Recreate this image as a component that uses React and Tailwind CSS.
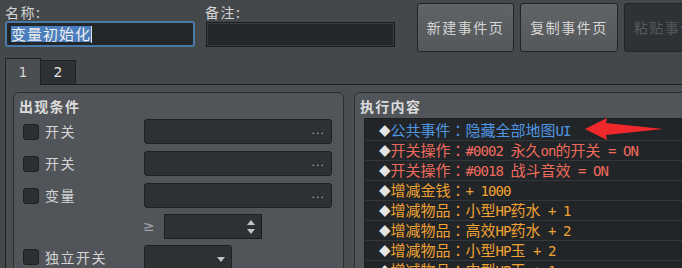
import React from 'react';

const rows = [
  { color: 'text-[#4f96e2]', text: '公共事件：隐藏全部地图UI' },
  { color: 'text-[#ee6a5c]', text: '开关操作：#0002 永久on的开关 = ON' },
  { color: 'text-[#ee6a5c]', text: '开关操作：#0018 战斗音效 = ON' },
  { color: 'text-[#f0a232]', text: '增减金钱：+ 1000' },
  { color: 'text-[#f0a232]', text: '增减物品：小型HP药水 + 1' },
  { color: 'text-[#f0a232]', text: '增减物品：高效HP药水 + 2' },
  { color: 'text-[#f0a232]', text: '增减物品：小型HP玉 + 2' },
  { color: 'text-[#f0a232]', text: '增减物品：中型HP玉 + 1' },
];

// split latin / cjk so the latin part gets the narrow mono font
function Runs({ text }) {
  const parts = text.match(/[\x00-\x7F]+|：|[^\x00-\x7F：]+/g) || [];
  return parts.map((p, i) => {
    if (p === '：') {
      return <span key={i} className="text-[15px] font-['Noto_Sans_CJK_JP',sans-serif]">{p}</span>;
    }
    if (/[\x00-\x7F]/.test(p[0])) {
      return (
        <span key={i} className="font-['DejaVu_Sans_Mono',monospace] text-[14px] tracking-[-0.93px]">
          {p}
        </span>
      );
    }
    return <span key={i} className="text-[15px]">{p}</span>;
  });
}

function Check() {
  return <div className="w-[16px] h-[16px] shrink-0 rounded-[3px] bg-[#2d3033] border border-[#1c1e20]" />;
}

function Field({ children }) {
  return (
    <div className="w-[188px] h-[25px] shrink-0 rounded-[3px] bg-[#2e3134] border border-[#1e2022] flex items-center justify-end pr-[6px]">
      {children}
    </div>
  );
}

function CondRow({ label, className = '' }) {
  return (
    <div className={`flex items-center pl-[9px] ${className}`}>
      <div className="w-[121px] shrink-0 flex items-center gap-[6px]">
        <Check />
        <span className="text-[14px] tracking-[1.5px] text-[#d4d4d4]">{label}</span>
      </div>
      <Field>
        <span className="font-['DejaVu_Sans',sans-serif] text-[11px] leading-none text-[#b4b4b4] tracking-[1px] -mt-[3px]">...</span>
      </Field>
    </div>
  );
}

export default function App() {
  return (
    <div className="relative w-[682px] h-[268px] overflow-hidden bg-[#45484b] font-['Noto_Sans_CJK_SC','Noto_Sans',sans-serif] text-[#d4d4d4]">
      {/* TOP ROW */}
      <div className="flex items-start pl-[5px] h-[58px]">
        <div className="w-[190px] shrink-0 flex flex-col">
          <div className="h-[21px] pt-[4px] leading-[17px] text-[14px] tracking-[1.5px]">名称:</div>
          <div className="h-[26px] rounded-[3px] border-2 border-[#4a78a8] bg-[#24272a] flex items-center pl-[4px]">
            <span className="bg-[#4a7dbd] text-[15px] leading-[16px] h-[16px] tracking-[1px] text-[#eeeeee]">变量初始化</span>
            <span className="w-px h-[17px] bg-[#e0e0e0]" />
          </div>
        </div>
        <div className="ml-[10px] w-[190px] shrink-0 flex flex-col">
          <div className="h-[22px] pt-[4px] leading-[17px] text-[14px] tracking-[1.5px]">备注:</div>
          <div className="ml-px w-[189px] h-[25px] border border-[#1a1c1e] shadow-[inset_0_0_0_1px_#3a3d40] bg-[#25282b]" />
        </div>
        <button className="ml-[22px] mt-[3px] w-[97px] h-[49px] shrink-0 rounded-[3px] border border-[#222426] bg-gradient-to-b from-[#606467] to-[#54585b] text-[14px] tracking-[1.5px] text-[#d6d6d6]">
          新建事件页
        </button>
        <button className="ml-[6px] mt-[3px] w-[98px] h-[49px] shrink-0 rounded-[3px] border border-[#222426] bg-gradient-to-b from-[#606467] to-[#54585b] text-[14px] tracking-[1.5px] text-[#d6d6d6]">
          复制事件页
        </button>
        <button className="ml-[6px] mt-[3px] w-[97px] h-[49px] shrink-0 rounded-[3px] border border-[#222426] bg-[#2f3235] text-[14px] tracking-[1.5px] text-[#55595c]">
          粘贴事件页
        </button>
      </div>

      {/* TABS */}
      <div className="flex items-end h-[27px] pl-[5px]">
        <div className="w-[36px] h-[27px] shrink-0 border border-b-0 border-[#1e2023] bg-[#4a4e51] flex items-center justify-center font-['DejaVu_Sans',sans-serif] text-[14px] text-[#d0d0d0]">
          1
        </div>
        <div className="w-[35px] h-[25px] shrink-0 border border-l-0 border-[#1e2023] bg-[#2e3134] flex items-center justify-center font-['DejaVu_Sans',sans-serif] text-[14px] text-[#e2e2e2]">
          2
        </div>
        <div className="flex-1 h-px bg-[#1e2023]" />
      </div>

      {/* PANE */}
      <div className="ml-[5px] h-[200px] border-l border-[#1e2023] bg-[#4a4e51] flex items-start pt-[7px] pl-[7px] gap-[10px]">
        {/* 出现条件 */}
        <div className="w-[331px] h-[220px] shrink-0 rounded-[6px] border border-[#2b2e31] bg-[#515559] flex flex-col">
          <div className="pl-[5px] pt-[4px] leading-[18px] text-[14px] font-bold tracking-[1.3px] text-[#dcdcdc]">出现条件</div>
          <CondRow label="开关" className="mt-[4px]" />
          <CondRow label="开关" className="mt-[7px]" />
          <CondRow label="变量" className="mt-[7px]" />
          <div className="flex items-center pl-[9px] mt-[6px]">
            <div className="w-[120px] shrink-0" />
            <span className="w-[21px] shrink-0 font-['DejaVu_Sans',sans-serif] text-[14px] text-[#9ea2a6]">≥</span>
            <div className="w-[98px] h-[25px] shrink-0 border border-[#1c1e20] bg-[#2e3134] flex flex-col items-end justify-center gap-[4px] pr-[6px]">
              <svg width="8" height="5" viewBox="0 0 8 5"><path d="M4 0 L8 5 L0 5 Z" fill="#c4c4c4" /></svg>
              <svg width="8" height="5" viewBox="0 0 8 5"><path d="M0 0 L8 0 L4 5 Z" fill="#c4c4c4" /></svg>
            </div>
          </div>
          <div className="flex items-start pl-[9px] mt-[6px]">
            <div className="w-[121px] h-[24px] shrink-0 flex items-center gap-[6px]">
              <Check />
              <span className="text-[14px] tracking-[1.5px] text-[#d4d4d4]">独立开关</span>
            </div>
            <div className="w-[88px] h-[30px] shrink-0 rounded-[3px] border border-[#1e2022] bg-[#2e3134] flex justify-end pt-[11px] pr-[6px]">
              <svg width="8" height="5" viewBox="0 0 8 5"><path d="M0 0 L8 0 L4 5 Z" fill="#c4c4c4" /></svg>
            </div>
          </div>
        </div>

        {/* 执行内容 */}
        <div className="w-[340px] h-[220px] shrink-0 rounded-[6px] border border-[#2b2e31] bg-[#515559] flex flex-col">
          <div className="pl-[5px] pt-[4px] leading-[18px] text-[14px] font-bold tracking-[1.3px] text-[#dcdcdc]">执行内容</div>
          <div className="ml-[9px] mt-[3px] h-[200px] border border-[#1c1e20] bg-[#222528] pt-[2px]">
            {rows.map((r, i) => (
              <div key={i} className="h-[20px] border-b border-[#35383b] pl-[14px] flex items-center whitespace-pre leading-[19px]">
                <span className="font-['DejaVu_Sans',sans-serif] text-[15px] text-[#e4e4e4]">◆</span>
                <span className={r.color}>
                  <Runs text={r.text} />
                </span>
              </div>
            ))}
          </div>
        </div>
      </div>

      {/* red annotation arrow */}
      <svg className="absolute left-[580px] top-[112px]" width="90" height="34" viewBox="0 0 90 34">
        <polygon points="5,17 27,6 26,11 83,17 26,23 27,28" fill="#f0282b" />
      </svg>
    </div>
  );
}
